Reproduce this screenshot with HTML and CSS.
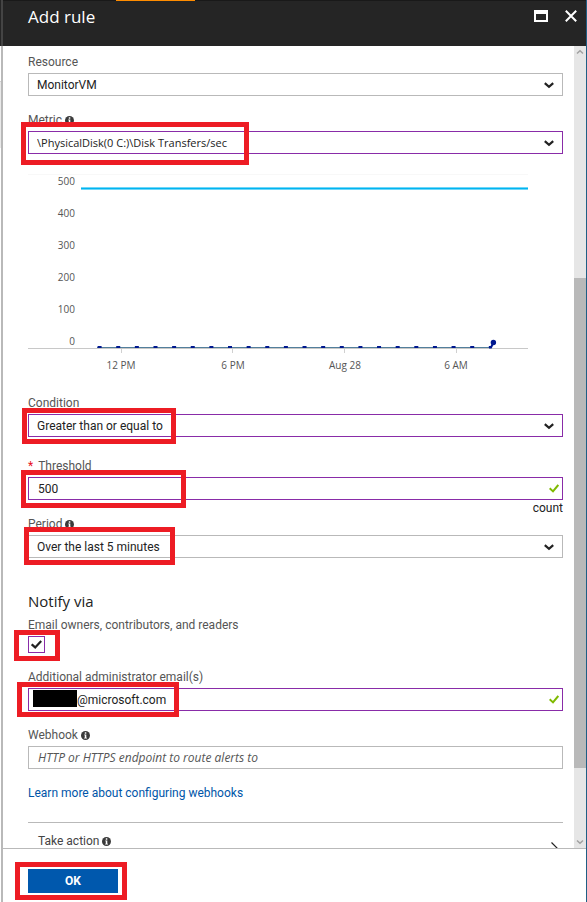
FILE: index.html
```html
<!DOCTYPE html>
<html lang="en">
<head>
<meta charset="utf-8">
<title>Add rule</title>
<link rel="stylesheet" href="styles.css">
</head>
<body>
<svg class="defs" aria-hidden="true">
  <symbol id="info" viewBox="0 0 9 9"><circle cx="4.5" cy="4.5" r="4.5" fill="#3a3a3a"/><path d="M3.8 1.3h1.5v1.4H3.8zM3.2 3.5h2.1v3.3h.7v.8H3.1v-.8h.7V4.3h-.6z" fill="#fff"/></symbol>
  <symbol id="chevron" viewBox="0 0 10 7"><path d="M.8 1.2 5 4.9 9.2 1.2" fill="none" stroke="#222" stroke-width="2.2"/></symbol>
  <symbol id="tick" viewBox="0 0 10 9"><path d="M.7 4.3 4 7.4 9.3 1" fill="none" stroke="#7fba00" stroke-width="2"/></symbol>
</svg>
<main class="blade">
  <header class="blade-header">
    <h1>Add rule</h1>
    <div class="window-buttons">
      <button type="button" aria-label="Maximize"><svg width="14" height="12" viewBox="0 0 14 12"><path d="M0 0h14v12H0zM2 4v6h10V4z" fill="#fff" fill-rule="evenodd"/></svg></button>
      <button type="button" aria-label="Close"><svg width="12" height="12" viewBox="0 0 12 12"><path d="M.8.8 11.2 11.2M11.2.8.8 11.2" stroke="#fff" stroke-width="2"/></svg></button>
    </div>
  </header>
  <div class="blade-body">
    <form class="form" id="rule">
      <div class="field">
        <label for="resource">Resource</label>
        <div class="control">
          <select id="resource"><option>MonitorVM</option></select>
          <svg class="chevron"><use href="#chevron"/></svg>
        </div>
      </div>
      <div class="field">
        <label for="metric">Metric <svg class="info"><use href="#info"/></svg></label>
        <div class="control edited">
          <select id="metric" class="counter-path"><option>\PhysicalDisk(0 C:)\Disk Transfers/sec</option></select>
          <svg class="chevron"><use href="#chevron"/></svg>
          <span class="mark mark-metric"></span>
        </div>
      </div>

      <svg class="chart" viewBox="0 0 500 205" role="img" aria-label="Disk transfers per second">
        <path d="M0 .5H500" stroke="#f8f8f8"/>
        <g class="y-labels">
          <text x="47" y="11">500</text><text x="47" y="43">400</text><text x="47" y="75">300</text>
          <text x="47" y="107">200</text><text x="47" y="139">100</text><text x="47" y="171">0</text>
        </g>
        <path d="M53 14.5H500" stroke="#6fd6f8" stroke-width="3"/>
        <path d="M53 14.5H500" stroke="#00b4f0"/>
        <path d="M0 174.5H500" stroke="#c8c8c8"/>
        <path d="M93.500 175v4M204.500 175v4M316.500 175v4M428.500 175v4" stroke="#d0d0d0"/>
        <path d="M69 173.500H463" stroke="#527f9c"/>
        <path d="M69.600 173H463" stroke="#00188f" stroke-width="2" stroke-dasharray="4 14.630"/>
        <path d="M461 173.500h2l2.400-5" fill="none" stroke="#00188f" stroke-width="2"/>
        <circle cx="465.400" cy="168.500" r="2.700" fill="#00188f"/>
        <g class="x-labels">
          <text x="93" y="195">12 PM</text><text x="205" y="195">6 PM</text>
          <text x="317" y="195">Aug 28</text><text x="428" y="195">6 AM</text>
        </g>
      </svg>

      <div class="field roomy">
        <label for="condition">Condition</label>
        <div class="control edited">
          <select id="condition"><option>Greater than or equal to</option></select>
          <svg class="chevron"><use href="#chevron"/></svg>
          <span class="mark mark-condition"></span>
        </div>
      </div>
      <div class="field with-unit">
        <label for="threshold"><span class="required">*</span>Threshold</label>
        <div class="control edited">
          <input type="text" id="threshold" value="500">
          <svg class="tick"><use href="#tick"/></svg>
          <span class="mark mark-threshold"></span>
        </div>
        <div class="unit">count</div>
      </div>
      <div class="field">
        <label for="period">Period <svg class="info"><use href="#info"/></svg></label>
        <div class="control">
          <select id="period"><option>Over the last 5 minutes</option></select>
          <svg class="chevron"><use href="#chevron"/></svg>
          <span class="mark mark-period"></span>
        </div>
      </div>

      <h2>Notify via</h2>
      <div class="field">
        <label for="owners">Email owners, contributors, and readers</label>
        <div class="check">
          <input type="checkbox" id="owners" checked>
          <svg width="11" height="9" viewBox="0 0 11 9"><path d="M.7 4.300 4.200 7.400 10.200 1" fill="none" stroke="#222" stroke-width="2.200"/></svg>
          <span class="mark mark-owners"></span>
        </div>
      </div>
      <div class="field">
        <label for="emails">Additional administrator email(s)</label>
        <div class="control edited">
          <span class="redacted"></span>
          <input type="text" id="emails" class="after-redacted" value="@microsoft.com">
          <svg class="tick"><use href="#tick"/></svg>
          <span class="mark mark-emails"></span>
        </div>
      </div>
      <div class="field">
        <label for="webhook">Webhook <svg class="info"><use href="#info"/></svg></label>
        <div class="control">
          <input type="text" id="webhook" placeholder="HTTP or HTTPS endpoint to route alerts to">
        </div>
      </div>
      <a class="learn" href="#webhooks">Learn more about configuring webhooks</a>
      <div class="action">
        <span>Take action <svg class="info"><use href="#info"/></svg></span>
        <svg width="8" height="14" viewBox="0 0 8 14"><path d="M.5.500 7 7 .5 13.500" fill="none" stroke="#222" stroke-width="1.200"/></svg>
      </div>
    </form>
    <div class="rail" aria-hidden="true">
      <svg width="12" height="12" viewBox="0 0 12 12"><path d="M3 7.500 6 4.800 9 7.500" fill="none" stroke="#a0a0a0" stroke-width="1.500"/></svg>
      <div class="rail-before"></div>
      <div class="rail-thumb"></div>
      <div class="rail-after"></div>
      <svg width="12" height="12" viewBox="0 0 12 12"><path d="M3 4.500 6 7.200 9 4.500" fill="none" stroke="#a0a0a0" stroke-width="1.500"/></svg>
    </div>
  </div>
  <footer class="blade-footer">
    <div class="ok-wrap">
      <button type="submit" form="rule" class="ok">OK</button>
      <span class="mark mark-ok"></span>
    </div>
  </footer>
</main>
</body>
</html>
```
FILE: styles.css
```css
* { box-sizing: border-box; }
body {
  margin: 0;
  font: 12px/16px Roboto, "Open Sans", sans-serif;
  color: #222;
  background: #fff;
}
.defs { position: absolute; width: 0; height: 0; }
.blade {
  height: 100vh;
  display: flex;
  flex-direction: column;
  padding-left: 1px;
  border-right: 1px solid #1f5f85;
  background: linear-gradient(#252525 46px, #fff 46px, #fff 81px, #b9b9b9 81px, #e9e9e9 82px, #e9e9e9 148px, #fff 148px);
}
.blade-header {
  flex: none;
  height: 46px;
  padding: 7px 9px 0 25px;
  display: flex;
  justify-content: space-between;
  align-items: flex-start;
  background:
    linear-gradient(#ff8c00, #ff8c00) 113px 0 / 79px 1px no-repeat,
    linear-gradient(#191919 1px, #252525 1px);
  border-left: 2px solid #444;
}
h1 { margin: 0; font: 400 17px/20px "Open Sans", sans-serif; color: #fff; }
.window-buttons { display: flex; gap: 17px; padding-top: 3px; }
.window-buttons button { padding: 0; border: 0; background: none; display: flex; }
.blade-body {
  flex: 1;
  min-height: 0;
  display: flex;
  overflow: hidden;
  background: #fff;
  border-left: 2px solid #b9b9b9;
}
.form { flex: 1; min-width: 0; padding: 8px 11px 0 25px; }
.field { margin-bottom: 16px; }
.field.roomy { margin-bottom: 21px; }
.field.with-unit { margin-bottom: 0; }
label { display: block; margin-bottom: 3px; color: #555; }
.info { width: 9px; height: 9px; vertical-align: -1px; }
.required { color: #e81123; margin-right: 5px; }
.control { position: relative; height: 23px; border: 1px solid #b9b9b9; }
.control.edited { border-color: #892ca8; }
.control select, .control input {
  display: block;
  width: 100%;
  height: 21px;
  margin: 0;
  padding: 0 24px 0 8px;
  border: 0;
  border-radius: 0;
  background: transparent;
  appearance: none;
  font: inherit;
  color: #222;
  outline: 0;
}
.control select.counter-path { font: 11px "Open Sans", sans-serif; }
.control input { padding-left: 9px; }
.control input.after-redacted { padding-left: 48px; }
.control input::placeholder { color: #555; font-family: "Open Sans", sans-serif; font-style: italic; opacity: 1; }
.redacted { position: absolute; left: 4px; top: 1px; width: 44px; height: 17px; background: #000; }
.chevron { position: absolute; right: 8px; top: 8px; width: 10px; height: 7px; }
.tick { position: absolute; right: 3px; top: 6px; width: 10px; height: 9px; }
.unit { padding-top: 1px; line-height: 15px; text-align: right; }
.mark { position: absolute; border: 5px solid #ed1c24; pointer-events: none; }
.mark-metric { left: -8px; top: -10px; width: 228px; height: 43px; }
.mark-condition { left: -7px; top: -7px; width: 154px; height: 36px; }
.mark-threshold { left: -8px; top: -8px; width: 165px; height: 38px; }
.mark-period { left: -5px; top: -9px; width: 151px; height: 38px; }
.mark-owners { left: -14px; top: -6px; width: 46px; height: 31px; }
.mark-emails { left: -12px; top: -7px; width: 162px; height: 35px; }
.mark-ok { left: -13px; top: -7px; width: 112px; height: 38px; }
.chart { display: block; width: 500px; max-width: 100%; margin: 20px 0 16px; font-family: "Open Sans", sans-serif; font-size: 10px; }
.chart text { fill: #555; }
.y-labels { text-anchor: end; }
.x-labels { text-anchor: middle; }
h2 { margin: 33px 0 6px; font: 400 15px/20px "Open Sans", sans-serif; }
.check { position: relative; width: 17px; height: 17px; }
.check input { display: block; margin: 0; width: 17px; height: 17px; appearance: none; border: 1px solid #892ca8; background: #fff; }
.check svg { position: absolute; left: 3px; top: 4px; pointer-events: none; }
.learn { display: block; color: #0055a8; text-decoration: none; }
.action {
  margin-top: 21px;
  padding: 10px 4px 0 10px;
  border-top: 1px solid #b9b9b9;
  display: flex;
  justify-content: space-between;
  color: #444;
}
.action > svg { margin-top: 9px; }
.rail { flex: none; width: 12px; display: flex; flex-direction: column; background: #e6e6e6; }
.rail svg { flex: none; }
.rail-before { flex: 220; }
.rail-thumb { flex: 490; background: #b9b9b9; }
.rail-after { flex: 68; }
.blade-footer {
  flex: none;
  padding: 20px 25px 9px;
  background: #fff;
  border-top: 1px solid #b9b9b9;
  border-left: 2px solid #b9b9b9;
}
.ok-wrap { position: relative; width: 90px; }
.ok { display: block; width: 100%; height: 24px; padding: 0; border: 0; background: #0058ad; color: #fff; font: inherit; font-weight: 700; }
```
